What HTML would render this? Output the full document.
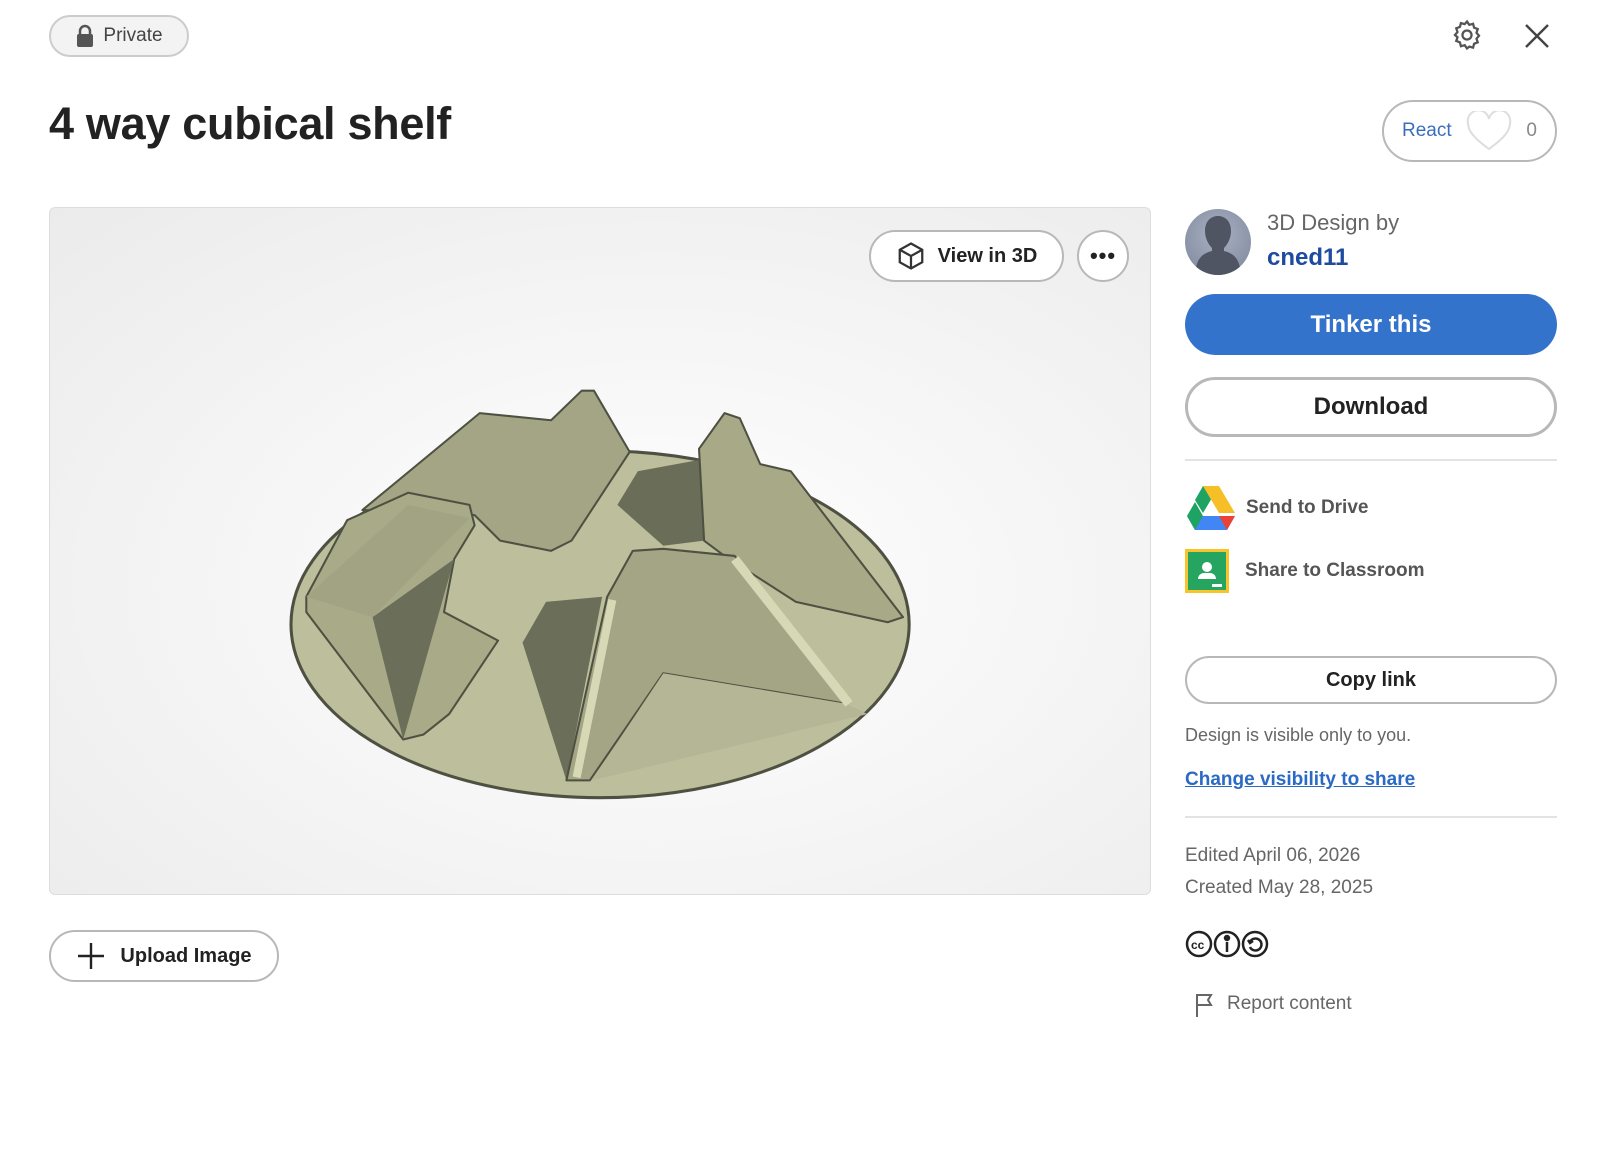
<!DOCTYPE html>
<html><head><meta charset="utf-8"><style>
*{box-sizing:border-box;margin:0;padding:0}
body{width:1600px;height:1169px;background:#fff;font-family:"Liberation Sans",sans-serif;color:#222;position:relative;overflow:hidden}
.abs{position:absolute}
.pill{position:absolute;border:2px solid #b8b8b8;border-radius:40px;display:flex;align-items:center;justify-content:center;background:#fff}
</style></head><body>
<div class="pill" style="left:49px;top:15px;width:140px;height:42px;background:#f3f3f3;border-color:#ccc;font-size:19px;color:#444;gap:8px">
<svg width="20" height="24" viewBox="0 0 20 24"><path d="M5 10V7a5 5 0 0 1 10 0v3" fill="none" stroke="#555" stroke-width="2.5"/><rect x="2" y="10" width="16" height="13" rx="2" fill="#555"/></svg>Private</div>
<svg class="abs" style="left:1450px;top:18px" width="34" height="34" viewBox="0 0 24 24" fill="none" stroke="#555" stroke-width="1.6"><circle cx="12" cy="12" r="3.2"/><path d="M12 2.5l1.6 2.3 2.7-.7.7 2.7 2.6 1-.9 2.6 1.8 2.1-1.8 2.1.9 2.6-2.6 1-.7 2.7-2.7-.7L12 21.5l-1.6-2.3-2.7.7-.7-2.7-2.6-1 .9-2.6L3.5 12l1.8-2.1-.9-2.6 2.6-1 .7-2.7 2.7.7z"/></svg>
<svg class="abs" style="left:1524px;top:23px" width="26" height="26" viewBox="0 0 26 26" stroke="#444" stroke-width="2.4"><path d="M2 2L24 24M24 2L2 24"/></svg>
<div class="abs" style="left:49px;top:98px;font-size:45px;font-weight:bold;color:#222;letter-spacing:-0.3px">4 way cubical shelf</div>
<div class="pill" style="left:1382px;top:100px;width:175px;height:62px;justify-content:space-between;padding:0 18px;font-size:19px;color:#3a6ebd">React
<svg width="46" height="40" viewBox="0 0 46 40"><path d="M23 38C8 27 2 20 2 12A10 10 0 0 1 23 8 10 10 0 0 1 44 12c0 8-6 15-21 26z" fill="#fff" stroke="#ddd" stroke-width="2"/></svg><span style="color:#888">0</span></div>
<div class="abs" style="left:49px;top:207px;width:1102px;height:688px;border:1px solid #ddd;border-radius:6px;background:radial-gradient(ellipse at 55% 55%,#fff 0%,#f5f5f5 50%,#ebebeb 100%)"></div>
<div class="pill" style="left:869px;top:230px;width:195px;height:52px;font-size:20px;font-weight:bold;gap:12px;color:#222">
<svg width="30" height="30" viewBox="0 0 24 24" fill="none" stroke="#333" stroke-width="1.8"><path d="M12 2l9 5v10l-9 5-9-5V7z M3 7l9 5 9-5 M12 12v10"/></svg>View in 3D</div>
<div class="pill" style="left:1077px;top:230px;width:52px;height:52px;font-size:22px;font-weight:bold;letter-spacing:1px">•••</div>
<svg class="abs" style="left:0;top:0" width="1600" height="1169" viewBox="0 0 1568 1146">
<g stroke="#4e5142" stroke-linejoin="round">
<ellipse cx="588" cy="612" rx="303" ry="170" fill="#bcbe9c" stroke-width="3"/>
<polygon points="355,500 470,405 540,412 570,383 582,383 617,443 560,530 540,540 490,530 465,505" fill="#a3a585" stroke-width="2"/>
<polygon points="605,495 625,462 690,450 690,530 650,535" fill="#6a6d57" stroke="none"/>
<polygon points="685,440 710,405 725,410 745,455 775,462 885,605 870,610 780,590 710,545 690,530" fill="#a7a987" stroke-width="2"/>
<polygon points="300,585 340,510 400,483 460,495 465,515 445,548 435,600 488,628 440,700 415,720 395,725 300,600" fill="#a8aa88" stroke-width="2"/>
<polygon points="365,605 445,548 395,725" fill="#6b6e58" stroke="none"/>
<polygon points="300,585 400,495 460,508 365,605" fill="#a1a383" stroke="none"/>
<polygon points="512,630 535,590 590,585 555,765" fill="#6b6e58" stroke="none"/>
<polygon points="595,585 620,540 650,538 720,545 830,690 650,660 578,765 555,765" fill="#a3a585" stroke-width="2"/>
<polygon points="650,660 830,690 850,700 580,765" fill="#b4b696" stroke="none"/>
</g>
<path d="M720,548 L832,690" stroke="#d6d8b6" stroke-width="9"/>
<path d="M600,588 L565,762" stroke="#d6d8b6" stroke-width="8"/>
</svg>
<div class="pill" style="left:49px;top:930px;width:230px;height:52px;font-size:20px;font-weight:bold;gap:14px">
<svg width="30" height="30" viewBox="0 0 30 30" stroke="#222" stroke-width="2.4"><path d="M15 2v26M2 15h26"/></svg>Upload Image</div>
<div class="abs" style="left:1185px;top:209px;width:66px;height:66px;border-radius:50%;overflow:hidden;background:radial-gradient(circle at 50% 40%,#a9b1c4,#7d8699)"><svg width="66" height="66" viewBox="0 0 66 66"><path d="M20 22c0-10 6-15 13-15s13 5 13 15c0 8-4 14-7 17v3c8 2 16 6 17 24H10c1-18 9-22 17-24v-3c-3-3-7-9-7-17z" fill="#4f5562"/></svg></div>
<div class="abs" style="left:1267px;top:210px;font-size:22px;color:#666">3D Design by</div>
<div class="abs" style="left:1267px;top:244px;font-size:24px;font-weight:bold;color:#1e4aa0">cned11</div>
<div class="pill" style="left:1185px;top:294px;width:372px;height:61px;background:#3473cc;border:none;color:#fff;font-size:24px;font-weight:bold">Tinker this</div>
<div class="pill" style="left:1185px;top:377px;width:372px;height:60px;border-width:3px;font-size:24px;font-weight:bold">Download</div>
<div class="abs" style="left:1185px;top:459px;width:372px;height:2px;background:#e3e3e3"></div>
<svg class="abs" style="left:1187px;top:486px" width="48" height="44" viewBox="0 0 48 44"><polygon points="16,0 32,0 16,27 8,14" fill="#1ea362"/><polygon points="16,0 32,0 48,27 32,27" fill="#f6bf27"/><polygon points="0,30 16,30 48,30 40,44 8,44" fill="#4285f4"/><polygon points="0,30 8,16 16,30 8,44" fill="#1ea362"/><polygon points="32,30 48,30 40,44" fill="#ea4335"/></svg>
<div class="abs" style="left:1246px;top:497px;font-size:19px;font-weight:bold;color:#555">Send to Drive</div>
<div class="abs" style="left:1185px;top:549px;width:44px;height:44px;background:#f7c52a;padding:3px"><div style="width:100%;height:100%;background:#25a55f;position:relative"><div style="position:absolute;left:14px;top:10px;width:10px;height:10px;border-radius:50%;background:#fff"></div><div style="position:absolute;left:10px;top:21px;width:18px;height:6px;border-radius:6px 6px 0 0;background:#fff"></div><div style="position:absolute;right:4px;bottom:3px;width:10px;height:3px;background:#fff"></div></div></div>
<div class="abs" style="left:1245px;top:560px;font-size:19px;font-weight:bold;color:#555">Share to Classroom</div>
<div class="pill" style="left:1185px;top:656px;width:372px;height:48px;font-size:20px;font-weight:bold">Copy link</div>
<div class="abs" style="left:1185px;top:725px;font-size:18px;color:#666">Design is visible only to you.</div>
<div class="abs" style="left:1185px;top:769px;font-size:19px;font-weight:bold;color:#2a6ac4;text-decoration:underline">Change visibility to share</div>
<div class="abs" style="left:1185px;top:816px;width:372px;height:2px;background:#e3e3e3"></div>
<div class="abs" style="left:1185px;top:840px;font-size:19px;color:#666;line-height:32px">Edited April 06, 2026<br>Created May 28, 2025</div>
<svg class="abs" style="left:1185px;top:930px" width="86" height="28" viewBox="0 0 86 28" fill="none" stroke="#222" stroke-width="2.5"><circle cx="14" cy="14" r="12"/><circle cx="42" cy="14" r="12"/><circle cx="70" cy="14" r="12"/><text x="6" y="19" font-size="12" font-weight="bold" fill="#222" stroke="none" font-family="Liberation Sans">cc</text><circle cx="42" cy="8" r="2" fill="#222"/><path d="M42 12v10"/><path d="M65 12a6 6 0 1 1 0 5M63 10l2 3 3-2"/></svg>
<svg class="abs" style="left:1194px;top:992px" width="22" height="26" viewBox="0 0 22 26" fill="none" stroke="#666" stroke-width="2"><path d="M3 25V3h14l-3 5 3 5H3"/></svg>
<div class="abs" style="left:1227px;top:993px;font-size:19px;color:#666">Report content</div>
</body></html>
